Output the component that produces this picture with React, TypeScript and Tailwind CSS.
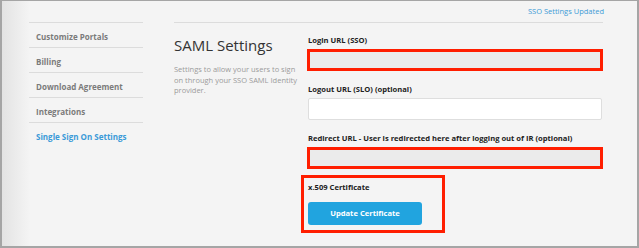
const sideItems = [
  "Customize Portals",
  "Billing",
  "Download Agreement",
  "Integrations",
];

const Field = ({
  label,
  flagged,
  first,
}: {
  label: string;
  flagged?: boolean;
  first?: boolean;
}) => (
  <div className={first ? "" : "mt-[13px]"}>
    <p className="mb-[3px] text-[7.6px] font-bold leading-[11px] text-[#222]">
      {label}
    </p>
    <div
      className={`h-[22px] w-[294px] ${
        flagged
          ? "-ml-[1px] w-[296px] border-[3px] border-[#ff1e00] bg-[#ebebeb]"
          : "rounded-[2px] border border-[#dedede] bg-white"
      }`}
    />
  </div>
);

export default function App() {
  return (
    <div
      className="flex h-[248px] w-[639px] flex-col overflow-hidden border-t border-r-2 border-b-2 border-l-2 border-[#a5a5a5] bg-[#f4f4f4] bg-[linear-gradient(to_right,#e3e3e3,#f4f4f4_28px)]"
      style={{ fontFamily: '"Open Sans", "Liberation Sans", sans-serif' }}
    >
      <div className="flex h-[21px] items-center justify-end pr-[33px]">
        <span className="text-[7.5px] text-[#3d9bd6]">SSO Settings Updated</span>
      </div>

      <div className="flex pl-[27px]">
        <ul className="w-[114px] border-t border-[#dcdcdc]">
          {sideItems.map((item) => (
            <li
              key={item}
              className="flex h-[25px] items-center border-b border-[#dcdcdc] pt-[3px] pl-[7px] text-[8px] font-bold text-[#7b7b7b]"
            >
              {item}
            </li>
          ))}
          <li className="flex h-[25px] items-center pt-[3px] pl-[7px] text-[8px] font-bold text-[#3a9ad8]">
            Single Sign On Settings
          </li>
        </ul>

        <div className="ml-[31px] flex w-[429px] border-t border-[#dcdcdc]">
          <div className="w-[135px] pt-[12px] pr-[6px]">
            <h2 className="text-[15px] leading-[20px] text-[#333]">
              SAML Settings
            </h2>
            <p className="mt-[9px] text-[7.5px] leading-[10.5px] text-[#9b9b9b]">
              Settings to allow your users to sign on through your SSO SAML
              Identity provider.
            </p>
          </div>

          <div className="flex flex-col pt-[12px]">
            <Field label="Login URL (SSO)" flagged first />
            <Field label="Logout URL (SLO) (optional)" />
            <Field
              label="Redirect URL - User is redirected here after logging out of IR (optional)"
              flagged
            />
            <div className="mt-[6px] -ml-[7px] w-[144px] border-[3px] border-[#ff1e00] pt-[4px] pb-[5px] pl-[4px]">
              <p className="text-[7.6px] font-bold leading-[11px] text-[#222]">
                x.509 Certificate
              </p>
              <button className="mt-[9px] h-[23px] w-[114px] rounded-[3px] bg-[#21a4df] text-[7.6px] font-bold text-white">
                Update Certificate
              </button>
            </div>
          </div>
        </div>
      </div>
    </div>
  );
}
